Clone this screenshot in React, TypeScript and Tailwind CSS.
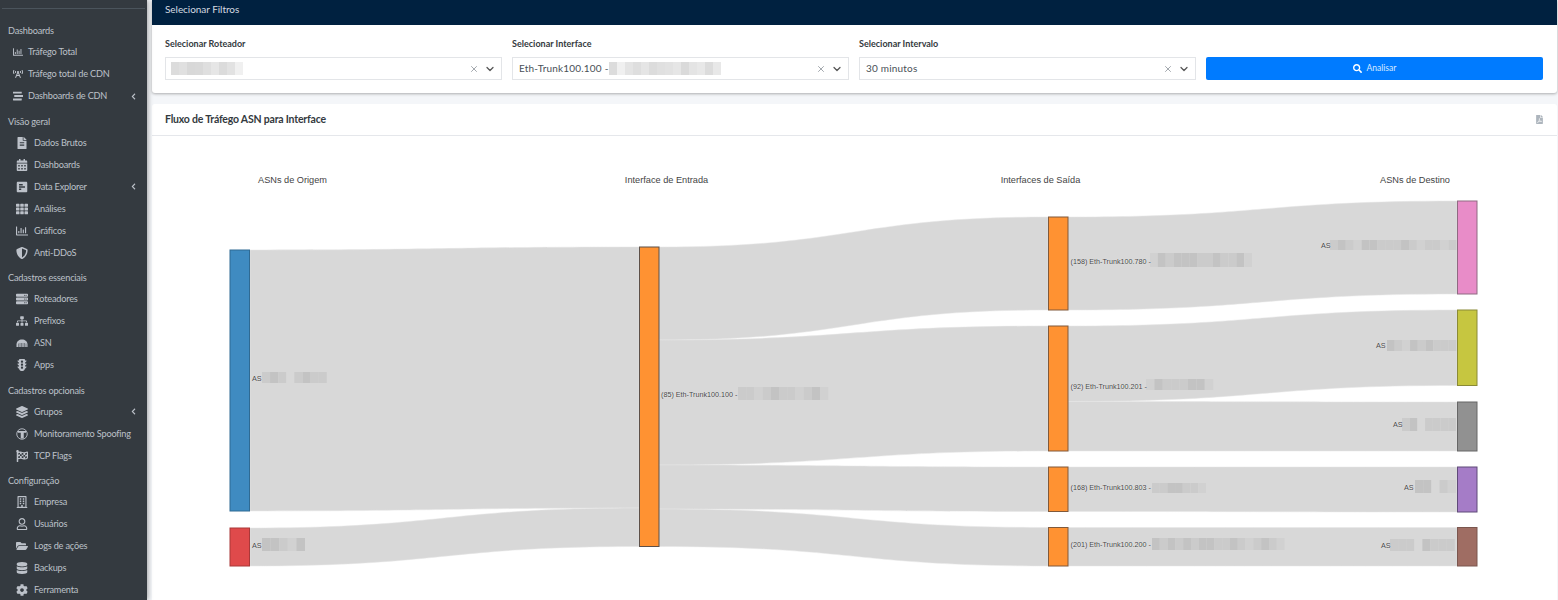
import type { ReactNode } from "react";
import {
  FaBroadcastTower,
  FaCalendarAlt,
  FaChevronLeft,
  FaCog,
  FaDatabase,
  FaFileAlt,
  FaFilePdf,
  FaFlagCheckered,
  FaFolderOpen,
  FaLayerGroup,
  FaPollH,
  FaRegBuilding,
  FaRegChartBar,
  FaRegUser,
  FaSearch,
  FaServer,
  FaShieldAlt,
  FaSitemap,
  FaStream,
  FaTh,
  FaTrafficLight,
} from "react-icons/fa";
import { ChevronDown, X } from "lucide-react";

type Item = { icon: ReactNode; label: string; sub?: boolean; arrow?: boolean };
type Group = { title: string; items: Item[] };

function SpoofIcon() {
  return (
    <svg viewBox="0 0 24 24" width={12} height={12} fill="none">
      <circle cx="12" cy="12" r="10.5" stroke="currentColor" strokeWidth="1.8" />
      <path d="M4 6h16v3.5h-4.5V21h-6V9.5H4z" fill="currentColor" />
    </svg>
  );
}

function AsnIcon() {
  return (
    <svg viewBox="0 0 24 16" width={12} height={8}>
      <path d="M1 16V11C1 5 6 1 12 1s11 4 11 10v5z" fill="currentColor" />
      <path d="M5 9v7M8 8v8M11 8v8M14 8v8M17 8v8M20 9v7" stroke="#343a40" strokeWidth="1" />
    </svg>
  );
}

const groups: Group[] = [
  {
    title: "Dashboards",
    items: [
      { icon: <FaRegChartBar />, label: "Tráfego Total" },
      { icon: <FaBroadcastTower />, label: "Tráfego total de CDN" },
      { icon: <FaStream />, label: "Dashboards de CDN", arrow: true },
    ],
  },
  {
    title: "Visão geral",
    items: [
      { icon: <FaFileAlt />, label: "Dados Brutos", sub: true },
      { icon: <FaCalendarAlt />, label: "Dashboards", sub: true },
      { icon: <FaPollH />, label: "Data Explorer", sub: true, arrow: true },
      { icon: <FaTh />, label: "Análises", sub: true },
      { icon: <FaRegChartBar />, label: "Gráficos", sub: true },
      { icon: <FaShieldAlt />, label: "Anti-DDoS", sub: true },
    ],
  },
  {
    title: "Cadastros essenciais",
    items: [
      { icon: <FaServer />, label: "Roteadores", sub: true },
      { icon: <FaSitemap />, label: "Prefixos", sub: true },
      { icon: <AsnIcon />, label: "ASN", sub: true },
      { icon: <FaTrafficLight />, label: "Apps", sub: true },
    ],
  },
  {
    title: "Cadastros opcionais",
    items: [
      { icon: <FaLayerGroup />, label: "Grupos", sub: true, arrow: true },
      { icon: <SpoofIcon />, label: "Monitoramento Spoofing", sub: true },
      { icon: <FaFlagCheckered />, label: "TCP Flags", sub: true },
    ],
  },
  {
    title: "Configuração",
    items: [
      { icon: <FaRegBuilding />, label: "Empresa", sub: true },
      { icon: <FaRegUser />, label: "Usuários", sub: true },
      { icon: <FaFolderOpen />, label: "Logs de ações", sub: true },
      { icon: <FaDatabase />, label: "Backups", sub: true },
      { icon: <FaCog />, label: "Ferramenta", sub: true },
    ],
  },
];

function Sidebar() {
  return (
    <aside className="relative z-10 h-[600px] w-[147px] shrink-0 overflow-hidden bg-[#343a40] text-[9.2px] tracking-[-0.2px] text-[#bcc1c9] shadow-[1px_0_5px_rgba(0,0,0,0.35)]">
      <div className="mx-[2px] mt-2 border-t border-[#4b545c]" />
      <nav className="pt-[12px]">
        {groups.map((g) => (
          <div key={g.title} className="mb-[4.5px]">
            <div className="flex h-[20px] items-center pl-2">{g.title}</div>
            {g.items.map((it) =>
              it.sub ? (
                <div key={it.label} className="flex h-[22px] items-center">
                  <span className="ml-[14.5px] flex w-[14px] items-center justify-center text-[12px]">{it.icon}</span>
                  <span className="ml-[5.5px] whitespace-nowrap">{it.label}</span>
                  {it.arrow && <FaChevronLeft className="mr-[10px] ml-auto text-[7px]" />}
                </div>
              ) : (
                <div key={it.label} className="flex h-[22px] items-center">
                  <span className="ml-[13px] flex items-center text-[10px]">{it.icon}</span>
                  <span className="ml-[5px] whitespace-nowrap">{it.label}</span>
                  {it.arrow && <FaChevronLeft className="mr-[10px] ml-auto text-[7px]" />}
                </div>
              ),
            )}
          </div>
        ))}
      </nav>
    </aside>
  );
}

function Redact({ cells }: { cells: string[] }) {
  return (
    <span className="inline-flex h-[13px]">
      {cells.map((c, i) => (
        <span key={i} className="w-[8px]" style={{ backgroundColor: c }} />
      ))}
    </span>
  );
}

function Select({ value, cells, label }: { value?: string; cells?: string[]; label: string }) {
  return (
    <div className="w-[337px] shrink-0">
      <div className="mb-[6px] text-[9px] leading-[14px] font-bold text-[#343a40]">{label}</div>
      <div className="flex h-[23px] items-center border border-[#e3e5e8] pl-[5px] text-[10px] text-[#495057]">
        {value && <span className="ml-[1px] tracking-[0.2px]">{value}</span>}
        {cells && <Redact cells={cells} />}
        <X size={10} strokeWidth={2.4} className="ml-auto text-[#a3a8ae]" />
        <ChevronDown size={12} strokeWidth={2.5} className="mr-[5px] ml-[5px] text-[#555]" />
      </div>
    </div>
  );
}

function Filters() {
  return (
    <section className="rounded-b-[3px] bg-white shadow-[0_1px_3px_rgba(0,0,0,0.3)]">
      <div className="flex h-[25px] items-start bg-[#002140] px-[13px] pt-[3px] text-[10px] leading-[13px] tracking-[-0.05px] text-[#d5dbe1]">
        Selecionar Filtros
      </div>
      <div className="flex items-end gap-[10px] pt-[12px] pr-[14px] pb-[13px] pl-[13px]">
        <Select label="Selecionar Roteador" cells={["#dcdcdc", "#e0e0e0", "#d8d8d8", "#d9d9d9", "#dfdfdf", "#e6e6e6", "#dbdbdb", "#e2e2e2", "#f0f0f0"]} />
        <Select
          label="Selecionar Interface"
          value="Eth-Trunk100.100 -"
          cells={["#dcdcdc", "#f0f0f0", "#e4e4e4", "#dedede", "#e5e5e5", "#dcdcdc", "#e0e0e0", "#e2e2e2", "#e6e6e6", "#dadada", "#e4e4e4", "#e8e8e8", "#dcdcdc", "#e8e8e8"]}
        />
        <Select label="Selecionar Intervalo" value="30 minutos" />
        <button className="flex h-[23px] flex-1 items-center justify-center gap-[5px] rounded-[2px] bg-[#007bff] text-[8.5px] text-[#dbeaff]">
          <FaSearch className="text-[9px] text-white" />
          Analisar
        </button>
      </div>
    </section>
  );
}

type Link = [number, number, number, number, number, number];

// x0, y0 top, y0 bottom, x1, y1 top, y1 bottom
const links: Link[] = [
  [250, 250, 511, 639, 247, 508],
  [250, 528, 566, 639, 508, 546.5],
  [659, 247, 340, 1048, 217, 310],
  [659, 340, 465, 1048, 326, 451],
  [659, 465, 509, 1048, 467, 511.5],
  [659, 509, 546.5, 1048, 527.5, 566],
  [1068, 217, 310, 1457, 201, 294],
  [1068, 326, 401.5, 1457, 310, 385.5],
  [1068, 401.5, 451, 1457, 402, 451],
  [1068, 467, 511.5, 1457, 467, 512],
  [1068, 527.5, 566, 1457, 527.5, 566],
];

const nodes: [number, number, number, string, string][] = [
  [230, 250, 511, "#3f8bc1", "#2f6a93"],
  [230, 528, 566, "#df4a4b", "#a93839"],
  [639.5, 247, 546.5, "#ff9232", "#5d5048"],
  [1048.5, 217, 310, "#ff9232", "#80593a"],
  [1048.5, 326, 451, "#ff9232", "#80593a"],
  [1048.5, 467, 511.5, "#ff9232", "#80593a"],
  [1048.5, 527.5, 566, "#ff9232", "#80593a"],
  [1457.5, 201, 294, "#e88cc8", "#8f6a82"],
  [1457.5, 310, 385.5, "#c6c640", "#8a8a36"],
  [1457.5, 402, 451, "#919191", "#666"],
  [1457.5, 467, 512, "#a57cc7", "#5f4a78"],
  [1457.5, 527.5, 566, "#9f6d63", "#7a564e"],
];

const titles: [number, string][] = [
  [292.5, "ASNs de Origem"],
  [666.5, "Interface de Entrada"],
  [1040.5, "Interfaces de Saída"],
  [1415, "ASNs de Destino"],
];

const labels: [number, number, string][] = [
  [252, 381, "AS"],
  [252, 548, "AS"],
  [661, 397, "(85) Eth-Trunk100.100 -"],
  [1070.5, 264, "(158) Eth-Trunk100.780 -"],
  [1070.5, 389, "(92) Eth-Trunk100.201 -"],
  [1070.5, 490, "(168) Eth-Trunk100.803 -"],
  [1070.5, 547, "(201) Eth-Trunk100.200 -"],
  [1321, 248, "AS"],
  [1376, 348, "AS"],
  [1393, 427, "AS"],
  [1404, 490, "AS"],
  [1381, 548, "AS"],
];

// redacted stretches of the labels: x, y, cell shades, height, cell width
const blurs: [number, number, number[], number, number][] = [
  [262, 372, [0, 1, 0, -2, 0, 1, 0, 0], 11, 8.1],
  [262, 538, [1, 1, 0, -1, 1], 13, 8.6],
  [738, 387, [0, 0, -1, 0, 1, 0, 0, -1, 0, 1, -1], 13, 8.2],
  [1150, 253, [-1, 1, 0, 1, 1, 1, 0, 0, 1, 0, 0, 1, -1], 14, 7.85],
  [1146, 379, [-1, 1, 0, 0, 0, 1, 1, -1], 11, 8.4],
  [1152, 483, [0, 0, 1, 1, 0, 0, -1], 10, 7.7],
  [1152, 538, [1, 0, 1, 0, 1, 0, 1, 1, 0, 0, 1, 0, -1, 0, 1, 0, -1], 12, 7.8],
  [1330, 240, [0, 1, 0, -1, 1, 1, 0, 0, 0, 1, 0, -1, 0, 0, -1, 0], 10, 7.9],
  [1387, 340, [1, 0, -1, 1, 0, 1, 0, 0, 0], 11, 7.7],
  [1402, 418, [0, 1, -2, 0, 0, 0, 0], 13, 7.7],
  [1415, 480, [1, 1, -2, 0, -1], 13, 8.2],
  [1390, 539, [0, 0, 0, -2, 1, 0, 0, 0], 12, 8.1],
];

function shade(c: number) {
  if (c === 1) return "#c3c3c3";
  if (c === 0) return "#cbcbcb";
  if (c === -1) return "#d1d1d1";
  return "#d8d8d8";
}

function Sankey() {
  return (
    <svg width={1558} height={464} viewBox="0 136 1558 464" className="absolute top-0 left-[-152px] font-['Liberation_Sans',sans-serif]">
      {links.map(([x0, a0, b0, x1, a1, b1], i) => {
        const m = (x0 + x1) / 2;
        return (
          <path
            key={i}
            d={`M${x0} ${a0}C${m} ${a0} ${m} ${a1} ${x1} ${a1}L${x1} ${b1}C${m} ${b1} ${m} ${b0} ${x0} ${b0}Z`}
            fill="#d8d8d8"
            stroke="#e6e6e6"
            strokeWidth={0.5}
          />
        );
      })}
      {nodes.map(([x, y0, y1, fill, stroke], i) => (
        <rect key={i} x={x} y={y0} width={19.5} height={y1 - y0} fill={fill} stroke={stroke} strokeWidth={1} />
      ))}
      {titles.map(([x, t]) => (
        <text key={t} x={x} y={183} textAnchor="middle" fontSize={9.2} fill="#444">
          {t}
        </text>
      ))}
      {blurs.map(([x, y, cells, h, w], i) => (
        <g key={i}>
          {cells.map((c, j) => (
            <rect key={j} x={x + j * w} y={y} width={w} height={h} fill={shade(c)} />
          ))}
        </g>
      ))}
      {labels.map(([x, y, t]) => (
        <text key={t + x + y} x={x} y={y} fontSize={7.2} fill="#444" className="[text-shadow:0_0_1px_#fff]">
          {t}
        </text>
      ))}
    </svg>
  );
}

function FlowCard() {
  return (
    <section className="mt-[11px] flex-1 rounded-t-[3px] bg-white">
      <div className="flex h-[32px] items-center justify-between border-b border-[#e5e7eb] pr-[14px] pl-[13px]">
        <h2 className="text-[10.5px] font-bold tracking-[-0.2px] text-[#343a40]">Fluxo de Tráfego ASN para Interface</h2>
        <FaFilePdf className="mr-[-1px] text-[9px] text-[#adb5bd]" />
      </div>
      <div className="relative h-[464px] overflow-hidden">
        <Sankey />
      </div>
    </section>
  );
}

export default function App() {
  return (
    <div className="flex h-[600px] w-[1558px] overflow-hidden bg-[#f4f6f9] font-['Lato','Noto_Sans',sans-serif]">
      <Sidebar />
      <div className="mr-[1px] ml-[5px] flex min-w-0 flex-1 flex-col">
        <Filters />
        <FlowCard />
      </div>
    </div>
  );
}
